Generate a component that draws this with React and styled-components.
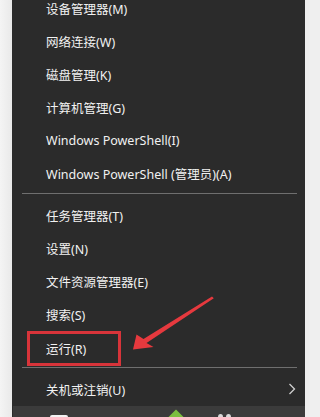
import React from 'react'
import styled, { createGlobalStyle } from 'styled-components'

const GlobalStyle = createGlobalStyle`
    html, body {
        margin: 0;
        padding: 0;
        background: #efefef;
        overflow: hidden;
    }
`;

const topItems = [
    '设备管理器(M)',
    '网络连接(W)',
    '磁盘管理(K)',
    '计算机管理(G)',
    'Windows PowerShell(I)',
    'Windows PowerShell (管理员)(A)',
]

const midItems = [
    { label: '任务管理器(T)' },
    { label: '设置(N)' },
    { label: '文件资源管理器(E)' },
    { label: '搜索(S)' },
    { label: '运行(R)', highlight: true },
]

const Chevron = () => (
    <svg width="8" height="12" viewBox="0 0 8 12">
        <polyline points="1.5,1 6.5,6 1.5,11" fill="none" stroke="#cfcfcf" strokeWidth="1.3" />
    </svg>
)

const Arrow = () => (
    <ArrowLayer width="309" height="417" viewBox="0 0 309 417">
        <polygon
            points="212,296.5 213.8,298.2 146.5,343 153.5,347 133,349.5 136.5,334.5 143.5,339"
            fill="#e6393e"
        />
    </ArrowLayer>
)

const App = () => {
    return (
        <Page>
            <GlobalStyle />
            <Edge />
            <Menu>
                <List>
                    {topItems.map((label) => (
                        <Item key={label}>
                            <Label>{label}</Label>
                        </Item>
                    ))}
                    <Separator />
                    {midItems.map((item) => (
                        <Item key={item.label} $highlight={item.highlight}>
                            <Label $highlight={item.highlight}>{item.label}</Label>
                        </Item>
                    ))}
                    <Separator />
                    <Item>
                        <Label>关机或注销(U)</Label>
                        <Chevron />
                    </Item>
                </List>
                <Taskbar>
                    <WhiteIcon />
                    <GreenIcon />
                    <Dots>
                        <Dot />
                        <Dot />
                    </Dots>
                </Taskbar>
            </Menu>
            <RightEdge />
            <Arrow />
        </Page>
    )
}

export default App

const Page = styled.div`
    position: relative;
    display: flex;
    width: 309px;
    height: 417px;
    overflow: hidden;
    font-family: "Noto Sans", "Noto Sans CJK SC", sans-serif;
`;

const Edge = styled.div`
    width: 12px;
    flex-shrink: 0;
    background: linear-gradient(90deg, #f4f4f4, #e9e9e9);
`;

const RightEdge = styled.div`
    width: 4px;
    flex-shrink: 0;
    background: #eeeeee;
`;

const Menu = styled.div`
    flex: 1;
    display: flex;
    flex-direction: column;
    background: #2b2b2b;
`;

const List = styled.div`
    display: flex;
    flex-direction: column;
    margin-top: -8.5px;
`;

const Item = styled.div`
    height: 33px;
    flex-shrink: 0;
    display: flex;
    align-items: ${({ $highlight }) => ($highlight ? 'flex-start' : 'center')};
    justify-content: space-between;
    padding: 0 9px 0 15px;
`;

const Label = styled.span`
    box-sizing: border-box;
    display: flex;
    align-items: center;
    height: 35px;
    margin-top: ${({ $highlight }) => ($highlight ? '0.5px' : '0')};
    padding: 0 32px 0 16px;
    border: 3px solid ${({ $highlight }) => ($highlight ? '#d8343a' : 'transparent')};
    color: #f1f1f1;
    font-size: 12.5px;
    white-space: nowrap;
`;

const Separator = styled.div`
    height: 9px;
    flex-shrink: 0;
    margin: 0 8px 0 10px;
    display: flex;
    align-items: flex-start;

    &::before {
        content: "";
        flex: 1;
        margin-top: 3.5px;
        height: 1px;
        background: #6f6f6f;
    }
`;

const Taskbar = styled.div`
    height: 40px;
    flex-shrink: 0;
    margin-top: 0;
    margin-left: 1px;
    display: flex;
    align-items: flex-start;
    padding-top: 6px;
    background: #3b3b3b;
`;

const WhiteIcon = styled.div`
    width: 18px;
    height: 16px;
    margin: 3px 0 0 37px;
    background: #f2f2f2;
    border-radius: 2px 2px 0 0;
`;

const GreenIcon = styled.div`
    width: 12px;
    height: 12px;
    margin-left: 102px;
    background: #7cbf3f;
    transform: rotate(45deg);
`;

const Dots = styled.div`
    display: flex;
    gap: 3px;
    margin: 2px 0 0 36px;
`;

const Dot = styled.div`
    width: 5px;
    height: 6px;
    border-radius: 50%;
    background: #d8d8d8;
`;

const ArrowLayer = styled.svg`
    position: absolute;
    left: 0;
    top: 0;
    pointer-events: none;
`;
